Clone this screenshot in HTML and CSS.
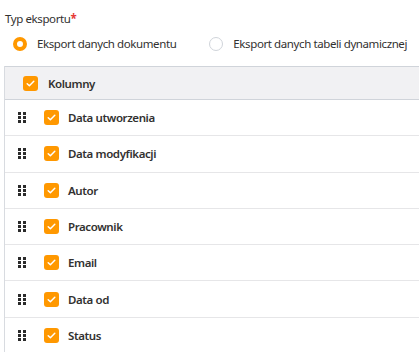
FILE: index.html
```html
<!DOCTYPE html>
<html lang="pl">
<head>
    <meta charset="UTF-8">
    <meta name="viewport" content="width=device-width, initial-scale=1.0">
    <title>Eksport</title>
    <link rel="stylesheet" href="styles.css">
</head>
<body>
    <main class="export">
        <div class="field-label">Typ eksportu<span class="required">*</span></div>
        <div class="radio-group">
            <label class="radio checked"><span class="radio-dot"></span>Eksport danych dokumentu</label>
            <label class="radio"><span class="radio-dot"></span>Eksport danych tabeli dynamicznej</label>
        </div>

        <div class="columns">
            <div class="columns-header">
                <span class="check"><svg viewBox="0 0 16 16"><path d="M4.5 8.2l2.3 2.2 4.7-4.7" /></svg></span>
                <span class="header-title">Kolumny</span>
            </div>
            <div class="col-row">
                <span class="drag"><i></i><i></i><i></i><i></i><i></i><i></i></span>
                <span class="check"><svg viewBox="0 0 16 16"><path d="M4.5 8.2l2.3 2.2 4.7-4.7" /></svg></span>
                <span class="col-name">Data utworzenia</span>
            </div>
            <div class="col-row">
                <span class="drag"><i></i><i></i><i></i><i></i><i></i><i></i></span>
                <span class="check"><svg viewBox="0 0 16 16"><path d="M4.5 8.2l2.3 2.2 4.7-4.7" /></svg></span>
                <span class="col-name">Data modyfikacji</span>
            </div>
            <div class="col-row">
                <span class="drag"><i></i><i></i><i></i><i></i><i></i><i></i></span>
                <span class="check"><svg viewBox="0 0 16 16"><path d="M4.5 8.2l2.3 2.2 4.7-4.7" /></svg></span>
                <span class="col-name">Autor</span>
            </div>
            <div class="col-row">
                <span class="drag"><i></i><i></i><i></i><i></i><i></i><i></i></span>
                <span class="check"><svg viewBox="0 0 16 16"><path d="M4.5 8.2l2.3 2.2 4.7-4.7" /></svg></span>
                <span class="col-name">Pracownik</span>
            </div>
            <div class="col-row">
                <span class="drag"><i></i><i></i><i></i><i></i><i></i><i></i></span>
                <span class="check"><svg viewBox="0 0 16 16"><path d="M4.5 8.2l2.3 2.2 4.7-4.7" /></svg></span>
                <span class="col-name">Email</span>
            </div>
            <div class="col-row">
                <span class="drag"><i></i><i></i><i></i><i></i><i></i><i></i></span>
                <span class="check"><svg viewBox="0 0 16 16"><path d="M4.5 8.2l2.3 2.2 4.7-4.7" /></svg></span>
                <span class="col-name">Data od</span>
            </div>
            <div class="col-row">
                <span class="drag"><i></i><i></i><i></i><i></i><i></i><i></i></span>
                <span class="check"><svg viewBox="0 0 16 16"><path d="M4.5 8.2l2.3 2.2 4.7-4.7" /></svg></span>
                <span class="col-name">Status</span>
            </div>
        </div>
    </main>
</body>
</html>
```

FILE: styles.css
```css
body {
    margin: 0;
    font-family: "Noto Sans", sans-serif;
    font-size: 11.5px;
    letter-spacing: -0.4px;
    color: #323130;
    background-color: #fff;
    overflow: hidden;
}

.export {
    padding: 10px 0 0 4px;
}

.field-label {
    line-height: 18px;
    margin-left: 1px;
}

.required {
    color: #e53935;
    font-weight: 700;
}

.radio-group {
    display: flex;
    gap: 33px;
    margin: 7px 0 0 9px;
    line-height: 18px;
    white-space: nowrap;
}

.radio {
    display: flex;
    align-items: center;
    gap: 10px;
}

.radio-dot {
    flex: none;
    width: 14px;
    height: 14px;
    box-sizing: border-box;
    border: 1px solid #d0d4da;
    border-radius: 50%;
    background-color: #fff;
}

.radio.checked .radio-dot {
    border: 4px solid #ff9800;
}

.columns {
    margin-top: 13px;
    border-left: 1px solid #d8dbe0;
}

.columns-header {
    display: flex;
    align-items: center;
    height: 32px;
    padding-left: 18px;
    gap: 10px;
    background-color: #f1f1f3;
    border-top: 1px solid #d0d4da;
    border-bottom: 1px solid #d0d4da;
}

.header-title {
    font-weight: 600;
}

.col-row {
    display: flex;
    align-items: center;
    height: 35.3px;
    padding-left: 13px;
    border-bottom: 1px solid #e6e6e8;
}

.col-name {
    font-weight: 600;
    margin-left: 9px;
}

.drag {
    display: grid;
    grid-template-columns: 3px 3px;
    gap: 1px 2px;
    width: 8px;
    margin-right: 18px;
}

.drag i {
    width: 3px;
    height: 3px;
    background-color: #2b2b2b;
}

.check {
    display: flex;
    width: 15px;
    height: 15px;
    border-radius: 3px;
    background-color: #ff9800;
}

.check svg {
    width: 15px;
    height: 15px;
    fill: none;
    stroke: #fff;
    stroke-width: 1.6;
    stroke-linecap: round;
    stroke-linejoin: round;
}
```
